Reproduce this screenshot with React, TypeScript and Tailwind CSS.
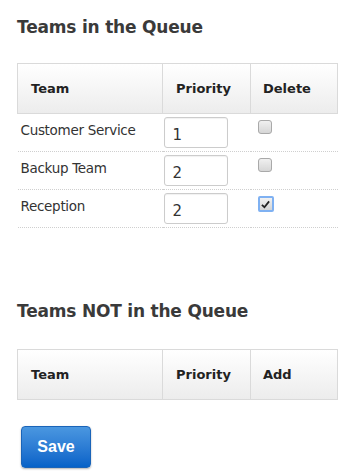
import { useState } from 'react';

type Team = { name: string; priority: string; remove: boolean };

const INITIAL: Team[] = [
  { name: 'Customer Service', priority: '1', remove: false },
  { name: 'Backup Team', priority: '2', remove: false },
  { name: 'Reception', priority: '2', remove: true },
];

function HeaderRow({ last }: { last: string }) {
  return (
    <thead>
      <tr className="h-[50px] bg-gradient-to-b from-white to-[#ececec] text-left text-[13px] font-bold text-[#222]">
        <th className="w-[145px] border border-[#dadada] pl-[13px] font-bold">Team</th>
        <th className="w-[88px] border border-[#dadada] pl-[13px] font-bold">Priority</th>
        <th className="border border-[#dadada] pl-[12px] font-bold">{last}</th>
      </tr>
    </thead>
  );
}

export default function App() {
  const [teams, setTeams] = useState<Team[]>(INITIAL);

  const toggle = (i: number) => {
    setTeams(teams.map((t, j) => (j === i ? { ...t, remove: !t.remove } : t)));
  };

  return (
    <div className="min-h-screen bg-white px-[17px] pt-[15px] font-['DejaVu_Sans',sans-serif] text-[#333]">
      <h2 className="text-[17px] leading-[25px] font-semibold tracking-[-0.2px] text-[#3a3a3a]">Teams in the Queue</h2>

      <table className="mt-[23px] w-[321px] table-fixed border-collapse">
        <HeaderRow last="Delete" />
        <tbody>
          {teams.map((t, i) => (
            <tr key={t.name} className="border-b border-dotted border-[#cfcfcf]">
              <td className="h-[38px] pl-[3px] pt-[6px] align-top text-[13.5px] tracking-[-0.3px]">{t.name}</td>
              <td className="h-[38px] pl-[1px] pt-[3px] align-top">
                <input
                  value={t.priority}
                  readOnly
                  className="block h-[31px] w-[64px] rounded-[3px] border border-[#cccccc] px-[8px] pt-[4px] text-[15px] text-[#333] shadow-[inset_0_1px_1px_rgba(0,0,0,0.06)] outline-none"
                />
              </td>
              <td className="h-[38px] pl-[7px] pt-[6px] align-top">
                <button
                  onClick={() => toggle(i)}
                  className={
                    t.remove
                      ? 'flex h-[16px] w-[16px] items-center justify-center rounded-[2px] border-2 border-[#7fb1f2] bg-gradient-to-b from-[#f2f2f2] to-[#d4d4d4]'
                      : 'block h-[14px] w-[14px] rounded-[3px] border border-[#a9a9a9] bg-gradient-to-b from-[#f0f0f0] to-[#d6d6d6]'
                  }
                >
                  {t.remove && (
                    <svg viewBox="0 0 10 10" className="h-[9px] w-[9px]">
                      <path d="M1 5.5 L3.8 8 L9 1.5" fill="none" stroke="#222" strokeWidth="2" />
                    </svg>
                  )}
                </button>
              </td>
            </tr>
          ))}
        </tbody>
      </table>

      <h2 className="mt-[71px] text-[17px] leading-[25px] font-semibold tracking-[-0.2px] text-[#3a3a3a]">Teams NOT in the Queue</h2>

      <table className="mt-[25px] w-[321px] table-fixed border-collapse">
        <HeaderRow last="Add" />
      </table>

      <button className="mt-[26px] ml-[4px] h-[42px] w-[70px] rounded-[4px] border border-[#1a64b8] bg-gradient-to-b from-[#4a97e0] to-[#0562c8] font-['Liberation_Sans',sans-serif] text-[16px] font-bold text-white shadow-[0_1px_2px_rgba(0,0,0,0.3)]">
        Save
      </button>
    </div>
  );
}
